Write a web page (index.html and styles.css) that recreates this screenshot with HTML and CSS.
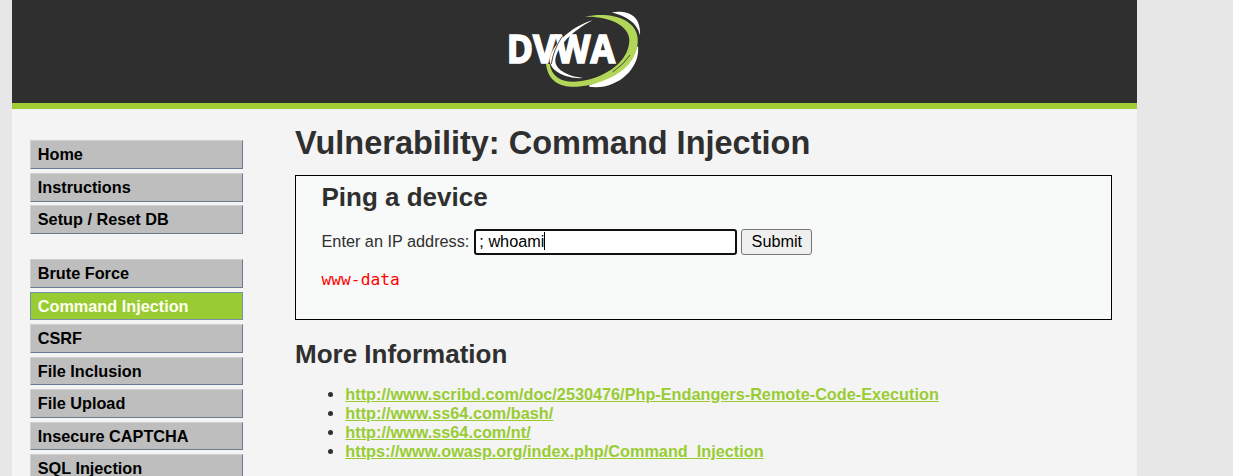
FILE: index.html
```html
<!DOCTYPE html>
<html lang="en">
<head>
<meta charset="utf-8">
<title>Vulnerability: Command Injection</title>
<link rel="stylesheet" href="styles.css">
</head>
<body>
<div class="container">
  <header class="header">
    <svg class="logo" viewBox="48 33 405 231" role="img" aria-label="DVWA">
      <path class="white" d="M365 37C400 31 454 36 450 106C440 66 410 50 365 37Z"/>
      <path class="white" d="M444 138C452 205 380 272 298 260L298 254C340 248 402 205 444 138Z"/>
      <path class="green" d="M285 50C360 34 439 56 443 115C447 172 405 218 345 240C270 269 178 278 168 192L179 192C187 244 238 255 300 238C370 217 417 175 418 120C418 78 360 48 285 50Z"/>
      <path class="green" d="M362 214Q392 190 409 162L420 170Q398 205 368 216Z"/>
      <path class="slit" d="M368 216Q402 193 420 165"/>
      <path class="white" d="M308 61C240 80 180 140 179 184C184 217 235 238 280 234C229 229 194 206 196 180C201 139 247 92 308 61Z"/>
      <text class="word" x="50" y="190" textLength="325" lengthAdjust="spacingAndGlyphs">DVWA</text>
      <path class="slit" d="M184 192Q190 150 216 110"/>
    </svg>
  </header>
  <div class="columns">
    <nav class="menu">
      <ul class="menu-block">
        <li class="item">Home</li>
        <li class="item">Instructions</li>
        <li class="item">Setup / Reset DB</li>
      </ul>
      <ul class="menu-block">
        <li class="item">Brute Force</li>
        <li class="item selected">Command Injection</li>
        <li class="item">CSRF</li>
        <li class="item">File Inclusion</li>
        <li class="item">File Upload</li>
        <li class="item">Insecure CAPTCHA</li>
        <li class="item">SQL Injection</li>
      </ul>
    </nav>
    <main class="body">
      <h1>Vulnerability: Command Injection</h1>
      <section class="vulnerable">
        <h2>Ping a device</h2>
        <form class="ping">
          <label for="ip">Enter an IP address:</label>
          <div class="field" id="ip">; whoami<span class="caret"></span></div>
          <button class="submit" type="button">Submit</button>
        </form>
        <pre>www-data</pre>
      </section>
      <h2>More Information</h2>
      <ul class="links">
        <li><a href="#">http://www.scribd.com/doc/2530476/Php-Endangers-Remote-Code-Execution</a></li>
        <li><a href="#">http://www.ss64.com/bash/</a></li>
        <li><a href="#">http://www.ss64.com/nt/</a></li>
        <li><a href="#">https://www.owasp.org/index.php/Command_Injection</a></li>
      </ul>
    </main>
  </div>
</div>
</body>
</html>
```
FILE: styles.css
```css
* { box-sizing: border-box; }
body {
  margin: 0;
  height: 476px;
  overflow: hidden;
  background: #e7e7e7;
  color: #2f2f2f;
  font: 16.25px/19px "Liberation Sans", Arial, sans-serif;
}
.container {
  width: 1125px;
  height: 476px;
  margin-left: 12px;
  background: #f4f4f4;
  overflow: hidden;
}
.header {
  height: 109px;
  padding: 11px 0 0 494px;
  background: #2f2f2f;
  border-bottom: 6px solid #a1cc33;
}
.logo { display: block; width: 135px; height: 77px; }
.white { fill: #fff; }
.green { fill: #b2d657; }
.slit { fill: none; stroke: #2f2f2f; stroke-width: 2.5; }
.word { fill: #fff; stroke: #fff; stroke-width: 5; font: bold 119px "Open Sans", sans-serif; }
.columns { display: flex; }
.menu { width: 213px; margin-left: 18px; padding-top: 31.45px; }
.menu-block {
  display: flex;
  flex-direction: column;
  gap: 3.9px;
  margin: 0 0 25.25px;
  padding: 0;
  list-style: none;
}
.item {
  height: 28.6px;
  padding: 4px 6.75px;
  border: 1px solid;
  border-color: #d1d1d1 #6a7891 #6a7891 #d1d1d1;
  background: #bebebe;
  color: #000;
  font-weight: bold;
}
.selected { background: #9c3; border-color: #7690af; color: #fffff0; }
.body { width: 817px; margin-left: 52px; padding-top: 15px; }
h1, h2 { margin: 0; font-weight: bold; }
h1 { font-size: 32.5px; line-height: 38px; }
h2 { font-size: 26px; line-height: 30px; }
.vulnerable {
  height: 145px;
  margin: 13px 0 19px;
  padding: 6px 25.5px;
  border: 1px solid #000;
  background: #f8faf9;
}
.ping { display: flex; align-items: center; margin-top: 17px; }
.ping label { padding-bottom: 2px; }
.field {
  width: 263px;
  height: 26px;
  margin: 0 4px 0 5px;
  padding: 0 3px 2px;
  display: flex;
  align-items: center;
  border: 2px solid #101010;
  border-radius: 3px;
  background: #fff;
  color: #000;
}
.caret { width: 1px; height: 18px; background: #000; }
.submit {
  width: 71px;
  height: 26px;
  padding: 0 0 2px;
  border: 1px solid #767676;
  border-radius: 3px;
  background: #efefef;
  color: #000;
  font: inherit;
}
pre { margin: 15px 0 0; color: #f00; font: 16.25px/19px "DejaVu Sans Mono", monospace; }
.links { margin: 16px 0 0; padding-left: 50.3px; }
.links a { color: #9c3; font-weight: bold; }
```
